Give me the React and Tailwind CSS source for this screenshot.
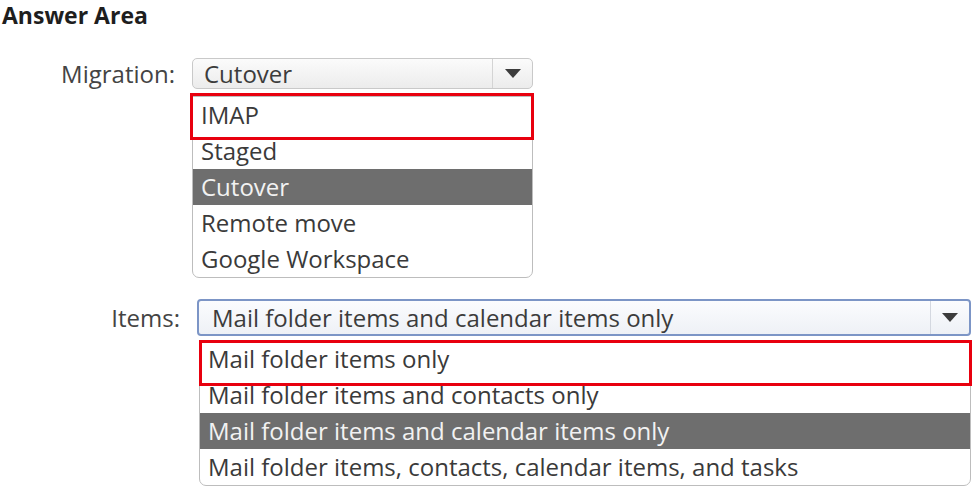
import React from "react";

function Arrow() {
  return (
    <svg width="16" height="9" viewBox="0 0 16 9">
      <path d="M0 0 H16 L8 9 Z" fill="#3c3c3c" />
    </svg>
  );
}

export default function App() {
  const migration = ["IMAP", "Staged", "Cutover", "Remote move", "Google Workspace"];
  const items = [
    "Mail folder items only",
    "Mail folder items and contacts only",
    "Mail folder items and calendar items only",
    "Mail folder items, contacts, calendar items, and tasks",
  ];
  return (
    <div className="w-[974px] h-[486px] bg-white overflow-hidden text-[#3a3a3a] font-['Open_Sans',sans-serif]">
      <div className="pl-[2px] text-[23px] leading-[31px] font-bold text-[#1e1e1e]">Answer Area</div>

      {/* Migration */}
      <div className="mt-[27px] flex">
        <div className="w-[175px] h-[31px] flex items-center justify-end text-[24px] text-[#444]">Migration:</div>
        <div className="ml-[17px] w-[341px]">
          <div className="h-[31px] flex rounded-[5px] border border-[#c9c9c9] bg-gradient-to-b from-[#fbfbfb] to-[#ececec]">
            <div className="flex-1 pl-[11px] flex items-center text-[24px] leading-none text-[#3c3c3c]">Cutover</div>
            <div className="w-[40px] border-l border-[#d4d4d4] flex items-center justify-center">
              <Arrow />
            </div>
          </div>
          <div className="relative mt-[7px] border border-[#bdbdbd] rounded-b-[7px] bg-white">
            {migration.map((m) => (
              <div
                key={m}
                className={
                  m === "Cutover"
                    ? "h-[36px] pl-[8px] flex items-center text-[24px] bg-[#6e6e6e] text-[#f2f2f2]"
                    : "h-[36px] pl-[8px] flex items-center text-[24px] text-[#3a3a3a]"
                }
              >
                {m}
              </div>
            ))}
            <div className="absolute left-[-3px] top-[-4px] w-[344px] h-[47px] border-[3px] border-[#e8000e]" />
          </div>
        </div>
      </div>

      {/* Items */}
      <div className="mt-[21px] flex">
        <div className="w-[180px] h-[37px] flex items-center justify-end text-[24px] text-[#444]">Items:</div>
        <div className="ml-[17px] w-[774px]">
          <div className="h-[37px] flex rounded-[4px] border-2 border-[#7c95c6] bg-gradient-to-b from-[#fbfcfe] to-[#eef1f6]">
            <div className="flex-1 pl-[13px] flex items-center text-[24px] leading-none text-[#3c3c3c]">
              Mail folder items and calendar items only
            </div>
            <div className="w-[39px] border-l border-[#d4d8e0] flex items-center justify-center">
              <Arrow />
            </div>
          </div>
          <div className="relative mt-[4px] ml-[2px] border border-[#bdbdbd] rounded-b-[7px] bg-white">
            {items.map((m, i) => (
              <div
                key={m}
                className={
                  i === 2
                    ? "h-[36px] pl-[8px] flex items-center text-[24px] bg-[#6e6e6e] text-[#f2f2f2]"
                    : "h-[36px] pl-[8px] flex items-center text-[24px] text-[#3a3a3a]"
                }
              >
                {m}
              </div>
            ))}
            <div className="absolute left-[-1px] top-[-1px] w-[773px] h-[46px] border-[3px] border-[#e8000e]" />
          </div>
        </div>
      </div>
    </div>
  );
}
